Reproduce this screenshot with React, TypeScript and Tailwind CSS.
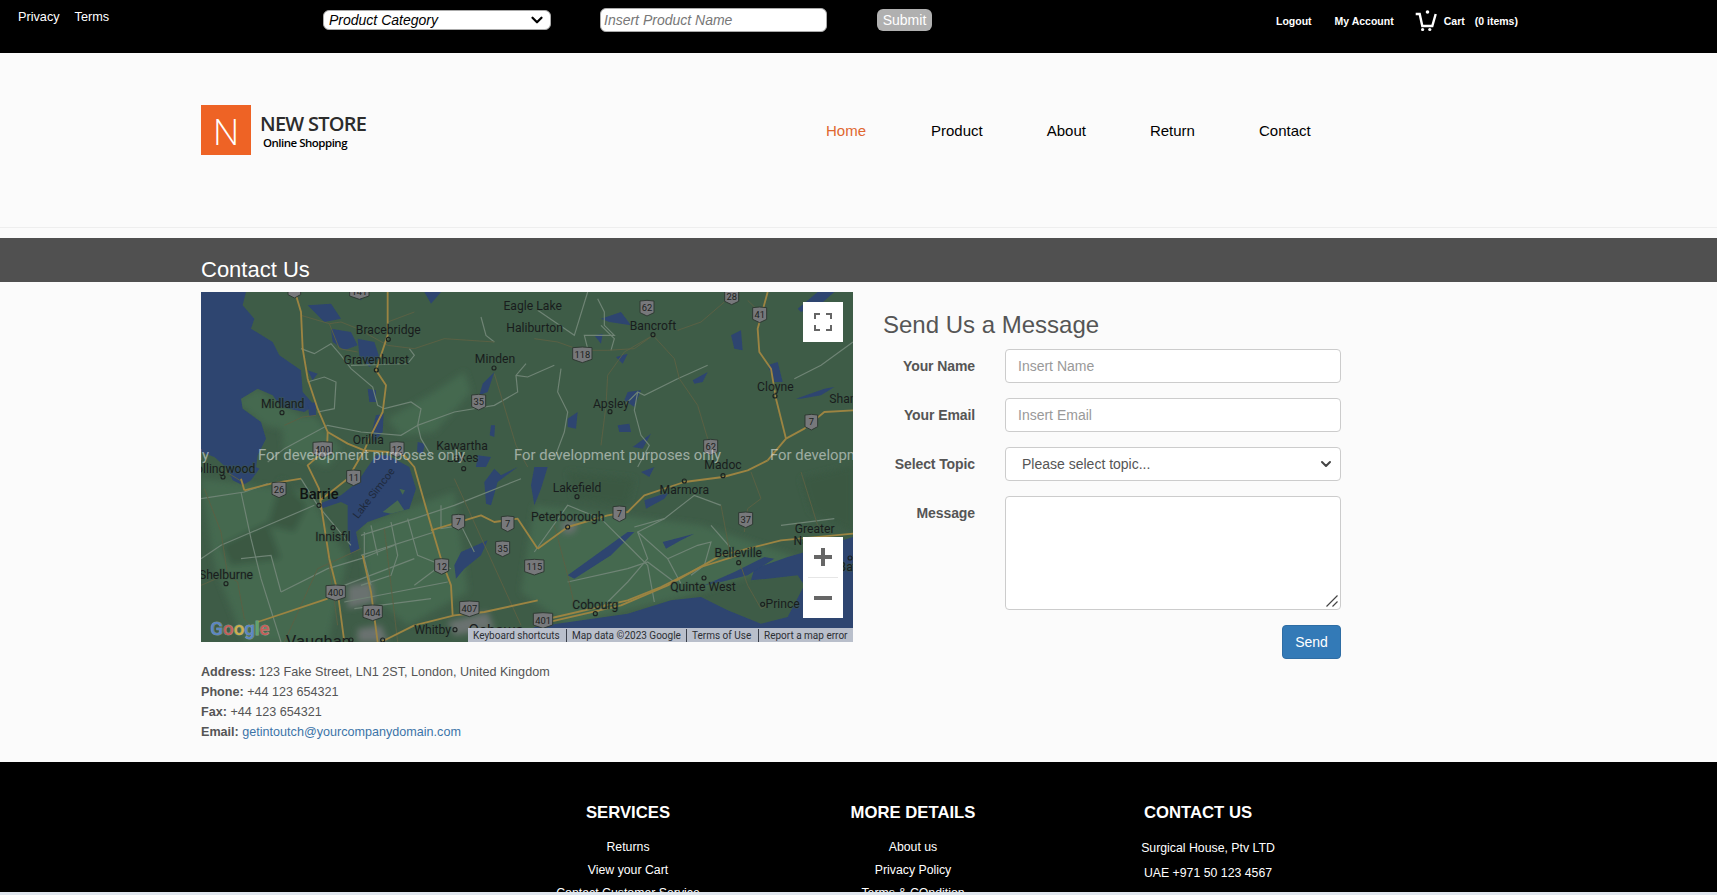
import React from 'react';
import { ChevronDown } from 'lucide-react';

// Map data uses a 1956x1050 grid (3 units = 1 screen pixel)
const labels: [string, number, number][] = [
  ['Eagle Lake', 995, 42],
  ['Haliburton', 1001, 108],
  ['Bracebridge', 562, 114],
  ['Gravenhurst', 526, 205],
  ['Minden', 882, 202],
  ['Bancroft', 1356, 102],
  ['Midland', 245, 336],
  ['Apsley', 1230, 335],
  ['Cloyne', 1723, 286],
  ['Shannonville', 1988, 322],
  ['Orillia', 502, 445],
  ['Kawartha', 783, 462],
  ['Lakes', 785, 498],
  ['Madoc', 1566, 520],
  ['Collingwood', 62, 530],
  ['Innisfil', 396, 735],
  ['Shelburne', 75, 849],
  ['Whitby', 695, 1015],
  ['Lakefield', 1128, 588],
  ['Marmora', 1450, 595],
  ['Peterborough', 1100, 675],
  ['Greater', 1841, 711],
  ['Napanee', 1850, 747],
  ['Belleville', 1612, 783],
  ['Quinte West', 1506, 885],
  ['Prince', 1745, 936],
  ['Cobourg', 1183, 940],
  ['Bath', 1950, 825],
];

const shields: [string, number, number][] = [
  ['', 280, -6], ['141', 475, -2], ['35', 833, 330], ['400', 365, 472], ['12', 588, 472],
  ['11', 458, 557], ['26', 234, 593], ['7', 772, 690], ['7', 920, 695], ['35', 905, 770],
  ['12', 722, 823], ['400', 404, 902], ['404', 515, 962], ['407', 805, 950],
  ['62', 1338, 48], ['28', 1592, 14], ['41', 1676, 68], ['118', 1144, 188], ['7', 1831, 390],
  ['62', 1529, 465], ['7', 1255, 665], ['37', 1634, 683], ['115', 1000, 825], ['401', 1026, 985],
];

const water = [
  'M0,0 H135 L125,40 L160,80 L150,110 L215,150 L235,190 L300,235 L305,300 L340,340 L310,360 L240,345 L215,310 L170,290 L120,320 L125,350 L180,390 L195,440 L170,490 L165,525 L175,530 L150,565 L125,580 L95,565 L80,530 L40,495 L0,480 Z',
  // Lake Simcoe
  'M500,525 L525,490 L560,490 L625,525 L645,590 L625,650 L570,665 L500,690 L465,720 L475,770 L450,785 L440,740 L440,640 L420,630 L360,650 L355,635 L420,610 L470,570 Z',
  // Muskoka and Kawartha lakes
  'M390,110 L450,120 L470,160 L430,175 L395,150 Z',
  'M470,140 L520,150 L535,195 L505,225 L475,190 Z',
  'M320,40 L390,35 L420,80 L370,90 Z',
  'M500,290 L525,295 L525,330 L505,330 Z',
  'M320,235 L350,245 L335,265 Z',
  'M320,335 L345,330 L345,372 L325,372 Z',
  'M525,370 L548,365 L545,420 L520,450 L510,430 Z',
  'M450,0 L500,0 L480,25 Z',
  'M670,0 L720,0 L690,35 Z',
  'M845,275 L880,240 L860,300 L835,310 Z',
  'M650,450 L672,455 L665,485 L648,480 Z',
  'M870,400 L882,400 L880,435 L866,430 Z',
  'M830,490 L870,495 L855,525 L825,525 Z',
  'M850,570 L880,530 L900,550 L950,525 L890,570 L870,640 L855,635 Z',
  'M780,780 L860,745 L840,790 L790,830 L765,860 L760,820 Z',
  'M1200,80 L1260,60 L1290,100 L1225,90 Z',
  'M1245,195 L1280,185 L1265,215 Z',
  'M1280,300 L1320,295 L1300,345 L1270,325 Z',
  'M1100,380 L1130,360 L1125,410 L1100,405 Z',
  'M1250,400 L1285,395 L1290,420 L1255,420 Z',
  'M1295,465 L1350,425 L1325,470 Z',
  'M1180,130 L1205,125 L1200,155 Z',
  'M1590,130 L1620,115 L1625,175 L1600,170 Z',
  'M1475,265 L1520,240 L1505,270 L1480,275 Z',
  'M1785,320 L1870,290 L1900,285 L1860,310 L1800,320 Z',
  'M1700,220 L1730,210 L1745,270 L1720,270 Z',
  'M1790,50 L1850,0 L1900,0 L1860,35 L1800,60 Z',
  'M1320,540 L1360,525 L1345,555 Z',
  'M1330,625 L1405,600 L1390,620 L1335,650 Z',
  'M1100,850 L1280,720 L1300,720 L1230,790 L1120,860 Z',
  'M1385,750 L1480,725 L1440,745 L1395,770 Z',
  'M1000,525 L1040,525 L1020,590 L1000,640 L990,580 Z',
  // Lake Ontario and Bay of Quinte
  'M978,1050 L1000,1005 L1280,965 L1410,925 L1500,915 L1580,955 L1680,995 L1760,975 L1810,880 L1790,850 L1700,860 L1650,865 L1660,830 L1760,795 L1830,775 L1956,735 L1956,1050 Z',
  'M1510,880 L1600,840 L1690,795 L1720,800 L1640,850 L1560,870 Z',
];

const lightLand = [
  'M100,330 L170,290 L230,330 L300,370 L240,410 L190,400 L130,350 Z',
  'M50,280 L80,265 L100,290 L85,305 Z',
  'M115,265 L130,270 L125,295 Z',
  'M240,380 L340,370 L420,470 L380,525 L250,480 Z',
  'M0,560 L320,600 L440,800 L380,1050 L130,1050 L40,820 Z',
  'M480,700 L760,600 L800,900 L620,1000 L500,900 Z',
  'M560,380 L700,300 L790,240 L810,300 L700,420 L600,430 Z',
  'M1000,640 L1500,700 L1800,800 L1500,900 L1100,1000 L960,900 Z',
];

const darkLand = [
  'M240,560 L320,640 L280,720 L200,700 Z',
  'M60,760 L200,690 L240,800 L90,820 Z',
  'M1100,540 L1300,560 L1280,640 L1120,620 Z',
  'M1800,560 L1956,520 L1956,720 L1830,660 Z',
];

const highways = [
  'M285,10 L300,60 L305,170 L320,260 L350,350 L380,420 L440,455 L490,475',
  'M380,420 L378,470 L320,520 L354,590 L360,640 L385,800 L410,900 L430,1050',
  'M560,0 L560,130 L525,235 L555,280 L545,360 L505,440 L490,475 L440,560 L358,625',
  'M490,475 L560,480 L610,490 L640,525 L690,700 L720,800 L750,880 L755,970',
  'M130,595 L210,575 L300,560',
  'M120,560 L130,595',
  'M170,990 L380,920',
  'M690,715 L840,670 L880,690 L950,680 L1010,770',
  'M485,790 L510,900 L530,1050',
  'M540,1050 L640,1000 L760,970 L850,960 L1010,925',
  'M1000,1000 L1260,940 L1400,880 L1560,790 L1740,745 L1956,725',
  'M1000,990 L1280,925 L1380,885 L1500,825 L1610,790',
  'M1010,770 L1100,705 L1220,670 L1280,660 L1330,610 L1450,570 L1566,555 L1640,535 L1700,505',
  'M1700,505 L1755,440 L1810,410 L1870,360 L1956,355',
  'M1700,0 L1670,110 L1675,180 L1710,230 L1725,320 L1755,440',
];

const thinRoads = [
  'M385,95 L420,90 L470,110 L560,160 L640,170 L730,140 L880,150',
  'M300,70 L385,95 L415,170 L470,180',
  'M640,60 L560,90',
  'M880,245 L945,460 L980,525',
  'M1000,140 L1070,150 L1140,175 L1220,175 L1300,170 L1356,130 L1420,200 L1435,260 L1490,340 L1520,440',
  'M1356,130 L1270,180 L1220,250 L1215,340 L1200,460',
  'M1430,115 L1500,90 L1570,30',
  'M1640,25 L1676,60',
  'M250,400 L305,375 L345,370',
  'M60,530 L125,570 L130,595',
  'M10,590 L60,720 L80,850 L110,870 L130,980 L150,1000',
  'M360,640 L410,1000',
  'M550,710 L590,1050',
  'M70,850 L0,880',
  'M250,1050 L350,830 L480,770',
  'M760,560 L860,780 L960,1000',
  'M1060,700 L1100,850 L1120,940',
  'M1560,640 L1590,800',
  'M1650,540 L1680,620 L1640,650 L1630,720',
  'M1800,540 L1850,700 L1870,710',
  'M1612,800 L1640,880 L1680,950 L1700,940',
];

const grayRoads = [
  'M300,170 L340,185 L390,155 L420,190 L450,230 L515,285 L530,340 L550,350 L630,330 L660,350 L650,400 L760,360 L880,340 L950,300 L945,250 L975,215',
  'M450,220 L620,215 L640,190 L625,170',
  'M320,270 L370,255 L405,270 L400,350 L350,360',
  'M200,510 L250,470 L380,400 L480,420 L600,430 L650,400 L660,440 L690,490',
  'M840,75 L855,130 L880,150',
  'M1010,55 L1120,130 L1160,0',
  'M1190,20 L1210,60 L1210,100 L1240,130 L1150,130 L1160,170',
  'M1200,100 L1240,140 L1230,175',
  'M1060,220 L980,255 L945,250',
  'M1080,230 L1070,300 L1100,360 L1090,420 L1060,500',
  'M1270,340 L1310,300 L1330,310 L1430,260',
  'M1310,300 L1300,355 L1320,430 L1345,460 L1310,525',
  'M1430,260 L1520,220',
  'M1780,260 L1860,220 L1956,150',
  'M0,620 L130,600 L200,575',
  'M300,560 L350,640 L400,700 L450,760',
  'M120,600 L150,740 L180,860 L240,1050',
  'M0,800 L60,760 L200,700 L340,640',
  'M120,800 L210,790 L240,900',
  'M240,900 L380,830 L480,800 L580,760',
  'M480,730 L640,680 L760,640 L960,560',
  'M480,790 L700,720',
  'M490,720 L490,800 L510,880',
  'M510,700 L530,790',
  'M570,690 L590,790 L570,850 L480,880',
  'M620,680 L650,790 L750,830',
  'M720,640 L720,710 L780,700 L820,780',
  'M640,880 L720,820',
  'M430,880 L640,800',
  'M430,930 L740,870',
  'M460,950 L690,920',
  'M1000,780 L1100,640 L1200,680 L1270,750 L1340,820 L1360,930',
  'M1300,705 L1390,680 L1480,610 L1560,640',
  'M1390,680 L1310,720 L1340,800 L1280,870 L1190,960',
  'M1310,720 L1400,800 L1440,875',
  'M1400,800 L1490,760 L1530,750 L1510,820 L1470,850',
  'M1100,870 L1280,830 L1340,810 L1420,870',
  'M1530,700 L1600,780',
  'M1740,700 L1900,680',
];

// grey pixels of the built-up areas
const urban = [
  'M440,880 L510,870 L520,930 L440,950 Z',
  'M470,1010 L540,1000 L560,1050 L470,1050 Z',
  'M740,990 L860,960 L880,1010 L760,1030 Z',
  'M1080,690 L1130,680 L1120,720 L1090,725 Z',
];

const Shield: React.FC<{ text: string; x: number; y: number }> = ({ text, x, y }) => {
  const w = text.length === 3 ? 29 : text.length === 2 ? 21 : 19;
  return (
    <g transform={`translate(${x},${y})`}>
      <path d={`M${-w},-21 Q0,-25 ${w},-21 L${w},14 L0,24 L${-w},14 Z`} fill="#77787b" stroke="#2f3a33" strokeWidth="3" strokeLinejoin="round" />
      <text x="0" y="10" textAnchor="middle" fontSize="28" fill="#1c1f20" fontFamily="Roboto, sans-serif">{text}</text>
    </g>
  );
};

const MapDrawing = () => (
  <svg viewBox="0 0 1956 1050" className="block h-[350px] w-[652px]">
    <defs>
      <filter id="patch"><feGaussianBlur stdDeviation="10" /></filter>
      <filter id="soft"><feGaussianBlur stdDeviation="1.6" /></filter>
    </defs>
    <rect width="1956" height="1050" fill="#3e5c47" />
    <g filter="url(#patch)">
      {lightLand.map((d, i) => <path key={i} d={d} fill="#456950" />)}
      {darkLand.map((d, i) => <path key={i} d={d} fill="#3a5843" />)}
      {urban.map((d, i) => <path key={i} d={d} fill="#6a7270" />)}
    </g>
    <g filter="url(#soft)">
      {water.map((d, i) => <path key={i} d={d} fill="#2d4570" />)}
      <path d="M545,660 L590,625 L610,655 L570,665 Z" fill="#466a50" />
      <path d="M595,590 L612,595 L605,608 Z" fill="#466a50" />
      {grayRoads.map((d, i) => <path key={i} d={d} fill="none" stroke="#6f8475" strokeWidth="3.5" />)}
      {thinRoads.map((d, i) => <path key={i} d={d} fill="none" stroke="#5a6044" strokeWidth="3" />)}
      {highways.map((d, i) => <path key={i} d={d} fill="none" stroke="#9c8442" strokeWidth="5.5" strokeLinejoin="round" />)}
    </g>
    {shields.map(([t, x, y], i) => <Shield key={i} text={t} x={x} y={y} />)}
    {[[562, 142], [526, 234], [879, 228], [243, 362], [788, 530], [1356, 128], [1227, 359], [1722, 312], [1566, 551], [66, 555], [354, 640], [396, 707], [75, 875], [450, 1044], [545, 1044], [762, 1013], [1128, 614], [1450, 567], [1100, 705], [1613, 812], [1509, 858], [1685, 937], [1183, 965], [1947, 798]].map(([x, y], i) => (
      <circle key={i} cx={x} cy={y} r="6" fill="none" stroke="#1d2220" strokeWidth="3.5" />
    ))}
    {labels.map(([t, x, y]) => (
      <text key={t} x={x} y={y + 12} textAnchor="middle" fontSize="36.5" fill="#191d1d" stroke="#3e5c47" strokeOpacity="0.55" strokeWidth="5" paintOrder="stroke" fontFamily="Roboto, sans-serif">{t}</text>
    ))}
    <text x="352" y="1064" textAnchor="middle" fontSize="50" fill="#191d1d" fontFamily="Roboto, sans-serif">Vaughan</text>
    <text x="885" y="1030" textAnchor="middle" fontSize="46" fill="#191d1d" fontFamily="Roboto, sans-serif">Oshawa</text>
    <text x="354" y="622" textAnchor="middle" fontSize="44" fontWeight="500" fill="#101313" fontFamily="Roboto, sans-serif">Barrie</text>
    <text x="0" y="0" transform="translate(527,610) rotate(-52)" textAnchor="middle" fontSize="32" fill="#1f2a3d" fontFamily="Roboto, sans-serif">Lake Simcoe</text>
    {[-597, 171, 939, 1707].map((x) => (
      <text key={x} x={x} y="503" fontSize="44.6" fill="#ffffff" fillOpacity="0.5" fontFamily="Roboto, sans-serif">For development purposes only</text>
    ))}
    <text x="28" y="1028" fontSize="56" fontWeight="500" stroke="#ffffff" strokeOpacity="0.35" strokeWidth="3" paintOrder="stroke" fontFamily="Roboto, sans-serif">
      <tspan fill="#5b86c5">G</tspan>
      <tspan fill="#c4605a">o</tspan>
      <tspan fill="#cdb04c">o</tspan>
      <tspan fill="#5b86c5">g</tspan>
      <tspan fill="#5fa46c">l</tspan>
      <tspan fill="#c4605a">e</tspan>
    </text>
  </svg>
);

const MapPanel = () => (
  <div className="relative h-[350px] w-[652px] overflow-hidden">
    <MapDrawing />
    {/* fullscreen */}
    <div className="absolute right-[10px] top-[10px] flex h-[40px] w-[40px] items-center justify-center bg-white">
      <svg viewBox="0 0 18 18" className="h-[18px] w-[18px]" fill="none" stroke="#666666" strokeWidth="2">
        <path d="M1,6 V1 H6 M12,1 H17 V6 M17,12 V17 H12 M6,17 H1 V12" />
      </svg>
    </div>
    {/* zoom buttons */}
    <div className="absolute right-[10px] top-[245px] flex h-[81px] w-[40px] flex-col items-center bg-white">
      <div className="flex h-[40px] w-full items-center justify-center">
        <svg viewBox="0 0 18 18" className="h-[18px] w-[18px]" fill="#666666"><path d="M7,0 H11 V7 H18 V11 H11 V18 H7 V11 H0 V7 H7 Z" /></svg>
      </div>
      <div className="h-px w-[30px] bg-[#e6e6e6]" />
      <div className="flex h-[40px] w-full items-center justify-center">
        <svg viewBox="0 0 18 18" className="h-[18px] w-[18px]" fill="#666666"><path d="M0,7 H18 V11 H0 Z" /></svg>
      </div>
    </div>
    {/* attribution */}
    <div className="absolute bottom-0 right-0 flex h-[14px] w-[385px] items-center whitespace-nowrap bg-[#b9bfcb] pt-px text-[10px] leading-[13px] text-[#2b2e33] [font-family:Roboto,sans-serif]">
      <span className="w-[98px] pl-[5px]">Keyboard shortcuts</span>
      <span className="w-[120px] border-l border-[#3a3f4a] pl-[5px]">Map data ©2023 Google</span>
      <span className="w-[72px] border-l border-[#3a3f4a] pl-[5px]">Terms of Use</span>
      <span className="w-[95px] border-l border-[#3a3f4a] pl-[5px]">Report a map error</span>
    </div>
  </div>
);

const TopBar = () => (
  <div className="flex h-[53px] shrink-0 items-start bg-black text-white">
    <div className="flex w-[323px] gap-[15px] pl-[18px] pt-[8px] text-[12.7px] leading-[18px]">
      <a>Privacy</a>
      <a>Terms</a>
    </div>
    <div className="mt-[10px] flex h-[20px] w-[228px] items-center justify-between rounded-md border border-[#aaaaaa] bg-white pl-[5px] pr-[4px] text-[14px] italic leading-[16px] text-black">
      <span>Product Category</span>
      <ChevronDown className="h-[18px] w-[18px] text-black" strokeWidth={3} />
    </div>
    <input
      placeholder="Insert Product Name"
      className="ml-[49px] mt-[8px] h-[24px] w-[227px] rounded-md border border-[#aaaaaa] bg-white pl-[3px] text-[14px] italic placeholder:text-[#777777]"
    />
    <button className="ml-[50px] mt-[9px] h-[22px] w-[55px] rounded-md bg-[#b0b0b0] text-[14px] leading-[22px] text-white">Submit</button>
    <div className="ml-[344px] flex items-center pt-[9px] text-[10.5px] font-bold leading-[20px]">
      <a>Logout</a>
      <a className="ml-[23px]">My Account</a>
      <svg viewBox="0 0 24 24" className="ml-[20px] h-[24px] w-[24px]" fill="none">
        <path d="M1.7,5 H5.7 L8.3,17 H18.3 L21.7,5" stroke="#ffffff" strokeWidth="2.4" />
        <circle cx="13.5" cy="3" r="1.8" fill="#ffffff" />
        <circle cx="8.6" cy="20.5" r="1.6" fill="#ffffff" />
        <circle cx="15.8" cy="20.5" r="1.6" fill="#ffffff" />
      </svg>
      <a className="ml-[6px]">Cart</a>
      <a className="ml-[10px]">(0 items)</a>
    </div>
  </div>
);

const Header = () => (
  <div className="flex h-[175px] shrink-0 items-start border-b border-[#eeeeee] pl-[201px] pt-[52px]">
    <div className="flex h-[50px] w-[50px] items-center justify-center bg-[#ee6325] text-[37px] font-light leading-none text-white [font-family:'Open_Sans',sans-serif]">N</div>
    <div className="ml-[10px] flex w-[565px] flex-col pt-[7px] [font-family:'Open_Sans',sans-serif]">
      <span className="-ml-px text-[20px] font-semibold leading-[24px] tracking-[-0.75px] text-[#2c2c2c]">NEW STORE</span>
      <span className="ml-[2px] text-[11.5px] font-semibold leading-[14px] tracking-[-0.5px] text-black">Online Shopping</span>
    </div>
    <nav className="flex gap-[64px] pt-[13px] text-[15px] leading-[26px] text-black">
      <a className="mr-px text-[#e0672f]">Home</a>
      <a>Product</a>
      <a>About</a>
      <a>Return</a>
      <a>Contact</a>
    </nav>
  </div>
);

const fieldClass = 'h-[34px] w-[336px] rounded border border-[#cccccc] bg-white px-3 text-[14px] text-[#555555] placeholder:text-[#999999]';

const FormRow: React.FC<{ label: string; children: React.ReactNode }> = ({ label, children }) => (
  <div className="flex items-start gap-[30px]">
    <label className="w-[92px] whitespace-nowrap pt-[7px] text-right text-[14px] font-bold leading-[20px] tracking-[-0.1px] text-[#555555]">{label}</label>
    {children}
  </div>
);

const ContactForm = () => (
  <div className="flex flex-col pt-[19px]">
    <h2 className="text-[24px] leading-[28px] text-[#555555]">Send Us a Message</h2>
    <div className="mt-[10px] flex flex-col gap-[15px]">
      <FormRow label="Your Name"><input placeholder="Insert Name" className={fieldClass} /></FormRow>
      <FormRow label="Your Email"><input placeholder="Insert Email" className={fieldClass} /></FormRow>
      <FormRow label="Select Topic">
        <div className="relative">
          <select className={`${fieldClass} appearance-none pl-[16px]`}>
            <option>Please select topic...</option>
          </select>
          <ChevronDown className="pointer-events-none absolute right-[7px] top-[9px] h-[16px] w-[16px] text-[#444444]" strokeWidth={3} />
        </div>
      </FormRow>
      <FormRow label="Message">
        <div className="relative h-[114px] w-[336px]">
          <textarea className="h-full w-full resize-none rounded border border-[#cccccc] bg-white px-3 py-1.5" />
          <svg viewBox="0 0 12 12" className="pointer-events-none absolute bottom-[3px] right-[3px] h-[12px] w-[12px]" fill="none" stroke="#444444" strokeWidth="1.2">
            <path d="M0.5,11.5 L11.5,0.5 M6.5,11.5 L11.5,6.5" />
          </svg>
        </div>
      </FormRow>
      <div className="flex justify-end">
        <button className="h-[34px] w-[59px] rounded border border-[#2e6da4] bg-[#337ab7] text-[14px] text-white">Send</button>
      </div>
    </div>
  </div>
);

const FooterColumn: React.FC<{ title: string; width: string; items: string[] }> = ({ title, width, items }) => (
  <div className={`${width} shrink-0 text-center`}>
    <h4 className="text-[16.7px] font-bold leading-[20px]">{title}</h4>
    <ul className="mt-[13px] flex flex-col">
      {items.map((item) => <li key={item}>{item}</li>)}
    </ul>
  </div>
);

export default function App() {
  return (
    <div className="flex h-screen flex-col overflow-hidden bg-[#fbfbfb] [font-family:'Liberation_Sans',Arial,sans-serif]">
      <TopBar />
      <Header />
      <div className="mt-[10px] flex h-[44px] shrink-0 items-end bg-[#505050] pl-[201px]">
        <h1 className="text-[22px] leading-[24px] text-white">Contact Us</h1>
      </div>
      <div className="flex shrink-0 gap-[30px] pl-[201px] pt-[10px]">
        <div>
          <MapPanel />
          <div className="mt-[20px] text-[12.6px] leading-[20px] text-[#555555]">
            <p><b>Address:</b> 123 Fake Street, LN1 2ST, London, United Kingdom</p>
            <p><b>Phone:</b> +44 123 654321</p>
            <p><b>Fax:</b> +44 123 654321</p>
            <p><b>Email:</b> <a className="text-[#3b74a8]">getintoutch@yourcompanydomain.com</a></p>
          </div>
        </div>
        <ContactForm />
      </div>
      <footer className="mt-[20px] flex min-h-0 flex-1 overflow-hidden bg-black pl-[486px] pt-[41px] text-[12.3px] leading-[23px] text-white">
        <FooterColumn title="SERVICES" width="w-[284px]" items={['Returns', 'View your Cart', 'Contact Customer Service']} />
        <FooterColumn title="MORE DETAILS" width="w-[286px]" items={['About us', 'Privacy Policy', 'Terms & COndition']} />
        <div className="w-[304px] shrink-0 text-center leading-[25px]">
          <h4 className="pr-[20px] text-[16.7px] font-bold leading-[20px]">CONTACT US</h4>
          <ul className="mt-[13px] flex flex-col">
            <li>Surgical House, Ptv LTD</li>
            <li>UAE +971 50 123 4567</li>
          </ul>
        </div>
      </footer>
      <div className="h-[3px] shrink-0 bg-[#dfe6ee]" />
    </div>
  );
}
